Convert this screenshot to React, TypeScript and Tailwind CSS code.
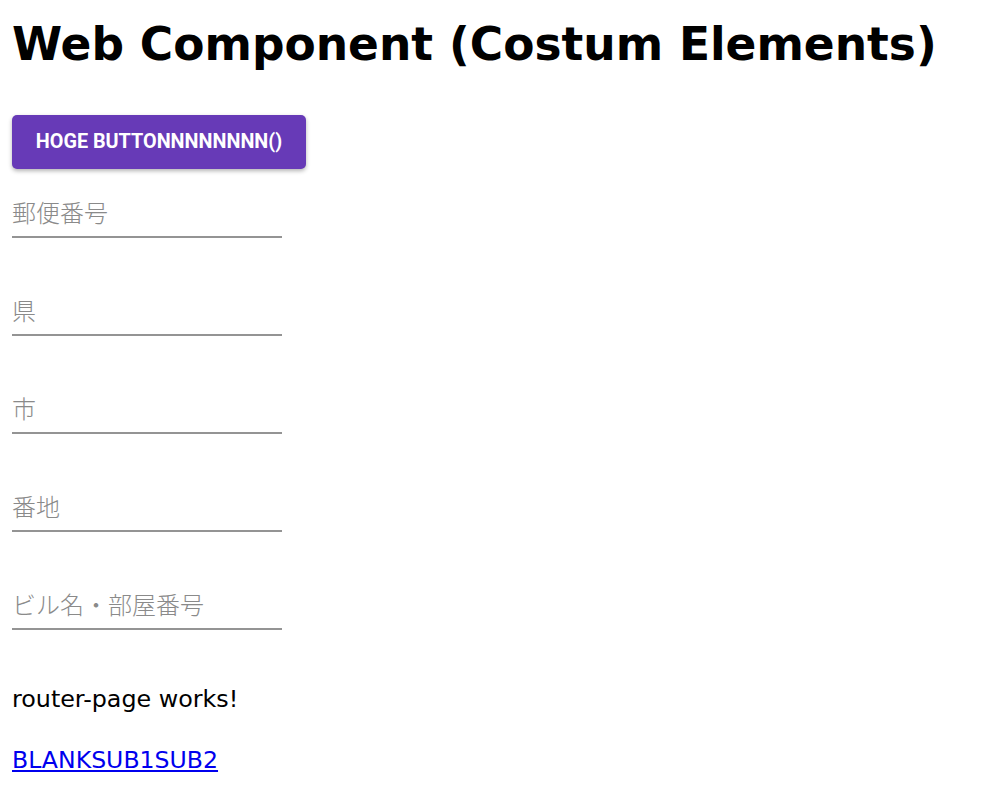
export default function App() {
  const fields = ["郵便番号", "県", "市", "番地", "ビル名・部屋番号"];

  return (
    <div className="min-h-[802px] bg-white px-3 pt-[17px] font-['DejaVu_Sans','Noto_Sans_CJK_JP',sans-serif] text-black">
      <h1 className="text-[45.5px] font-bold leading-[56px]">Web Component (Costum Elements)</h1>

      <button className="mt-[42px] h-[54px] w-[294px] rounded-[5px] bg-[#673ab7] font-['Roboto',sans-serif] text-[19.8px] font-bold uppercase text-white shadow-[0_2px_4px_rgba(0,0,0,0.3)]">
        Hoge buttonnnnnnnn()
      </button>

      <div className="flex flex-col">
        {fields.map((f, i) => (
          <div key={f} className={i === 0 ? "pt-[25px]" : "pt-[54px]"}>
            <input
              placeholder={f}
              className="h-[44px] w-[270px] border-b-2 border-[#949494] bg-transparent pb-[8px] font-['Noto_Sans_CJK_JP',sans-serif] text-[24px] font-light text-black outline-none placeholder:text-[#8a8a8a]"
            />
          </div>
        ))}
      </div>

      <p className="mt-[54px] text-[23.8px] leading-[30px]">router-page works!</p>
      <a href="#" className="mt-[31px] inline-block text-[23.6px] leading-[30px] text-[#0000ee] underline">
        BLANKSUB1SUB2
      </a>
    </div>
  );
}
